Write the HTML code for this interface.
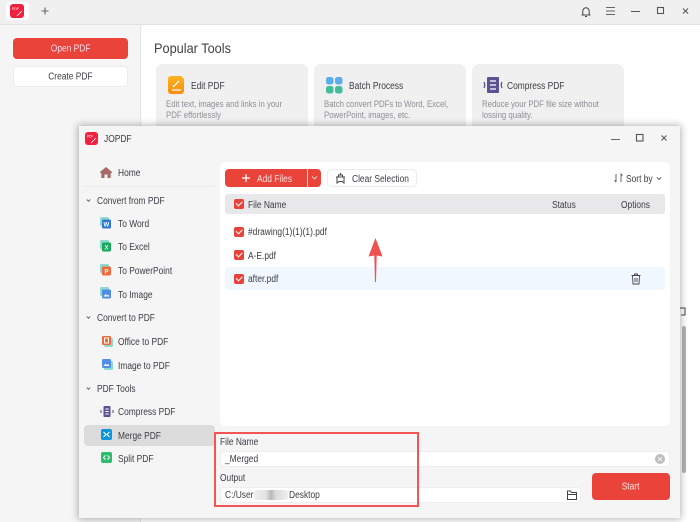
<!DOCTYPE html>
<html><head><meta charset="utf-8">
<style>
html,body{margin:0;padding:0;width:700px;height:522px;overflow:hidden;background:#fff}
body{font-family:"Liberation Sans","Noto Sans CJK SC",sans-serif;color:#3c3c44;position:relative;filter:blur(.25px)}
div,svg{position:absolute;box-sizing:border-box}
.t{white-space:nowrap;font-size:10px;line-height:14px;height:14px;transform:translateY(.8px) scaleX(.84);transform-origin:0 50%}
.t.g{color:#8e8e96;font-size:9px;line-height:10px;height:10px;transform:scaleX(.866)}
.b{white-space:nowrap;font-size:10px;text-align:center}
.b span{display:inline-block;transform:translateY(.7px) scaleX(.84)}
.card{background:#f0f0f0;border-radius:7px;width:152px;height:80px;top:64px}
.cb{width:10px;height:10px;background:#e8423a;border-radius:2px}
.cb:after{content:"";position:absolute;left:2px;top:2px;width:5px;height:2.5px;border-left:1.3px solid #fff;border-bottom:1.3px solid #fff;transform:rotate(-45deg)}
.nav{left:118px}
.sec{left:97px}
.chev{left:86px;width:5px;height:5px}
</style></head><body>

<!-- background app -->
<div style="left:0;top:0;width:700px;height:25px;background:#f0f0f0;border-bottom:1px solid #e2e2e2"></div>
<div style="left:6px;top:2px;width:23px;height:18px;background:#fff;border-radius:4px"></div>
<svg style="left:10px;top:4px" width="15" height="15" viewBox="0 0 15 15"><rect width="14" height="14" rx="3" fill="#f0213f"/><path d="M7 12l5-5" stroke="#fff" stroke-width=".8"/><text x="2" y="6" font-size="3.5" fill="#fff" font-family="Liberation Sans">PDF</text></svg>
<svg style="left:40px;top:6px" width="10" height="10" viewBox="0 0 10 10"><path d="M5 1.500v7M1.500 5h7" stroke="#666" stroke-width="1.100"/></svg>
<svg style="left:580px;top:5px" width="12" height="13" viewBox="0 0 12 13"><path d="M1.500 10h9M2.800 10V6a3.200 3.200 0 0 1 6.400 0v4M5 11.500h2" fill="none" stroke="#444" stroke-width="1"/></svg>
<svg style="left:605px;top:6px" width="11" height="10" viewBox="0 0 11 10"><path d="M1 1.500h9M1 5h9M1 8.500h9" stroke="#666" stroke-width="1"/></svg>
<svg style="left:630px;top:6px" width="11" height="10" viewBox="0 0 11 10"><path d="M1 5.500h9" stroke="#555" stroke-width="1"/></svg>
<svg style="left:656px;top:6px" width="10" height="10" viewBox="0 0 10 10"><rect x="1.500" y="1.500" width="6" height="6" fill="none" stroke="#555" stroke-width="1.100"/></svg>
<svg style="left:681px;top:6px" width="10" height="10" viewBox="0 0 10 10"><path d="M2 2.500l5 5M7 2.500l-5 5" stroke="#555" stroke-width="1"/></svg>

<div style="left:0;top:25px;width:141px;height:497px;background:#f5f5f5;border-right:1px solid #e6e6e6"></div>
<div class="b" style="left:13px;top:38px;width:115px;height:21px;background:#e9433a;border-radius:4px;color:#fde;line-height:21px"><span>Open PDF</span></div>
<div class="b" style="left:13px;top:66px;width:115px;height:21px;background:#fff;border:1px solid #ececec;border-radius:4px;line-height:19px"><span>Create PDF</span></div>
<div class="t" style="left:154px;top:39.500px;font-size:14px;line-height:17px;height:17px;color:#404048;transform:scaleX(.91)">Popular Tools</div>

<div class="card" style="left:156px"></div>
<div class="card" style="left:314px"></div>
<div class="card" style="left:472px"></div>

<svg style="left:168px;top:76px" width="17" height="18" viewBox="0 0 17 18"><defs><linearGradient id="o" x1="0" y1="0" x2="0" y2="1"><stop offset="0" stop-color="#ffb31f"/><stop offset="1" stop-color="#fb8c0f"/></linearGradient></defs><path d="M3 0h10l3 3v12a3 3 0 0 1-3 3H3a3 3 0 0 1-3-3V3a3 3 0 0 1 3-3z" fill="url(#o)"/><path d="M4 14h9M5 11l6-6" stroke="#fff" stroke-width="1.300"/></svg>
<div class="t" style="left:191px;top:79px">Edit PDF</div>
<div class="t g" style="left:166px;top:99px">Edit text, images and links in your</div>
<div class="t g" style="left:166px;top:109.500px">PDF effortlessly</div>

<svg style="left:326px;top:77px" width="17" height="17" viewBox="0 0 17 17"><rect width="7.500" height="7.500" rx="2.500" fill="#5cade8"/><rect x="9" width="7.500" height="7.500" rx="2.500" fill="#5cade8"/><rect y="9" width="7.500" height="7.500" rx="2.500" fill="#43bd9c"/><rect x="9" y="9" width="7.500" height="7.500" rx="2.500" fill="#43bd9c"/></svg>
<div class="t" style="left:349px;top:79px">Batch Process</div>
<div class="t g" style="left:324px;top:99px">Batch convert PDFs to Word, Excel,</div>
<div class="t g" style="left:324px;top:109.500px">PowerPoint, images, etc.</div>

<svg style="left:483px;top:76px" width="20" height="18" viewBox="0 0 20 18"><rect x="4" y="1" width="12" height="16" rx="1" fill="#5b5293"/><path d="M7 5h6M7 9h6M7 13h6" stroke="#fff" stroke-width="1.200"/><path d="M1 6q1.500 3 0 6M19 6q-1.500 3 0 6" fill="none" stroke="#5b5293" stroke-width="1.300"/></svg>
<div class="t" style="left:507px;top:79px">Compress PDF</div>
<div class="t g" style="left:482px;top:99px">Reduce your PDF file size without</div>
<div class="t g" style="left:482px;top:109.500px">lossing quality.</div>

<!-- scrollbar behind -->
<div style="left:682px;top:326px;width:4px;height:147px;background:#b4b4b4;border-radius:2px"></div>
<svg style="left:680px;top:305px" width="6" height="12" viewBox="0 0 6 12"><path d="M0 3h5v7H1" fill="none" stroke="#444" stroke-width="1"/></svg>

<!-- dialog -->
<div style="left:79px;top:126px;width:601px;height:392px;background:#f5f5f5;box-shadow:0 0 7px 1px rgba(0,0,0,.3)"></div>
<svg style="left:85px;top:132px" width="14" height="14" viewBox="0 0 14 14"><rect width="13" height="13" rx="3" fill="#f0213f"/><path d="M6 11l5-5" stroke="#fff" stroke-width=".8"/><text x="2" y="5.500" font-size="3.200" fill="#fff" font-family="Liberation Sans">PDF</text></svg>
<div class="t" style="left:104px;top:132px">JOPDF</div>
<svg style="left:610px;top:134px" width="11" height="10" viewBox="0 0 11 10"><path d="M1 5.500h9" stroke="#666" stroke-width="1"/></svg>
<svg style="left:635px;top:133px" width="10" height="10" viewBox="0 0 10 10"><rect x="1.500" y="1.500" width="6.500" height="6.500" fill="none" stroke="#555" stroke-width="1.100"/></svg>
<svg style="left:660px;top:134px" width="10" height="10" viewBox="0 0 10 10"><path d="M1.500 1.500l5 5M6.500 1.500l-5 5" stroke="#555" stroke-width="1"/></svg>

<!-- dialog nav -->
<svg style="left:100px;top:167px" width="12" height="11" viewBox="0 0 12 11"><path d="M6 0L0 5v1h1.300v5h3.200V7.500h3V11h3.200V6H12V5z" fill="#a86a66"/></svg>
<div class="t" style="left:118px;top:166px">Home</div>
<div style="left:84px;top:186px;width:131px;height:1px;background:#ebebeb"></div>

<svg class="chev" style="top:198px" viewBox="0 0 5 5"><path d="M.8 1.500L2.500 3.300 4.200 1.500" fill="none" stroke="#555" stroke-width=".9"/></svg>
<div class="t sec" style="top:194px">Convert from PDF</div>

<svg style="left:100px;top:217px" width="13" height="13" viewBox="0 0 13 13"><rect width="9" height="9" rx="1.500" fill="#8fd8cf"/><rect x="2" y="2.500" width="9" height="9" rx="1.500" fill="#2f78d6"/><text x="3.500" y="9.500" font-size="6" font-weight="bold" fill="#fff" font-family="Liberation Sans">W</text></svg>
<div class="t nav" style="top:217px">To Word</div>
<svg style="left:100px;top:240px" width="13" height="13" viewBox="0 0 13 13"><rect width="9" height="9" rx="1.500" fill="#8fd8cf"/><rect x="2" y="2.500" width="9" height="9" rx="1.500" fill="#18a85e"/><text x="4.500" y="9.500" font-size="6" font-weight="bold" fill="#fff" font-family="Liberation Sans">X</text></svg>
<div class="t nav" style="top:240px">To Excel</div>
<svg style="left:100px;top:264px" width="13" height="13" viewBox="0 0 13 13"><rect width="9" height="9" rx="1.500" fill="#8fd8cf"/><rect x="2" y="2.500" width="9" height="9" rx="1.500" fill="#ee6a3c"/><text x="4.500" y="9.500" font-size="6" font-weight="bold" fill="#fff" font-family="Liberation Sans">P</text></svg>
<div class="t nav" style="top:264px">To PowerPoint</div>
<svg style="left:100px;top:287px" width="13" height="13" viewBox="0 0 13 13"><rect width="9" height="9" rx="1.500" fill="#8fd8cf"/><rect x="2" y="2.500" width="9" height="9" rx="1.500" fill="#4f8fe6"/><path d="M3.500 9.500l2-2.500 1.500 1.500 1-1 1.500 2z" fill="#fff"/></svg>
<div class="t nav" style="top:288px">To Image</div>

<svg class="chev" style="top:315px" viewBox="0 0 5 5"><path d="M.8 1.500L2.500 3.300 4.200 1.500" fill="none" stroke="#555" stroke-width=".9"/></svg>
<div class="t sec" style="top:311px">Convert to PDF</div>

<svg style="left:101px;top:335px" width="13" height="13" viewBox="0 0 13 13"><rect x="3" y="3" width="9" height="9" rx="1.500" fill="#8fd8cf"/><rect x="1" y="1" width="9" height="9" rx="1.500" fill="#ee6a3c"/><rect x="3.500" y="3" width="4" height="5" fill="none" stroke="#fff" stroke-width="1"/></svg>
<div class="t nav" style="top:335px">Office to PDF</div>
<svg style="left:101px;top:358px" width="13" height="13" viewBox="0 0 13 13"><rect x="3" y="3" width="9" height="9" rx="1.500" fill="#8fd8cf"/><rect x="1" y="1" width="9" height="9" rx="1.500" fill="#4f8fe6"/><path d="M2.500 8l2-2.500 1.500 1.500 1-1 1.500 2z" fill="#fff"/></svg>
<div class="t nav" style="top:359px">Image to PDF</div>

<svg class="chev" style="top:386px" viewBox="0 0 5 5"><path d="M.8 1.500L2.500 3.300 4.200 1.500" fill="none" stroke="#555" stroke-width=".9"/></svg>
<div class="t sec" style="top:382px">PDF Tools</div>

<svg style="left:100px;top:406px" width="14" height="12" viewBox="0 0 14 12"><rect x="3.500" y="0" width="7" height="11" rx="1" fill="#5b5293"/><path d="M5.300 3h3.400M5.300 5.500h3.400M5.300 8h3.400" stroke="#fff" stroke-width=".9"/><path d="M1 4v3M13 4v3" stroke="#5b5293" stroke-width="1.100"/></svg>
<div class="t nav" style="top:405px">Compress PDF</div>
<div style="left:84px;top:425px;width:131px;height:21px;background:#dcdcdc;border-radius:4px"></div>
<svg style="left:101px;top:429px" width="12" height="12" viewBox="0 0 12 12"><rect width="11" height="11" rx="2" fill="#0f94d8"/><path d="M2.500 3l2.500 2.500L2.500 8M8.500 3L6 5.500 8.500 8" fill="none" stroke="#fff" stroke-width="1"/></svg>
<div class="t nav" style="top:429px">Merge PDF</div>
<svg style="left:101px;top:452px" width="12" height="12" viewBox="0 0 12 12"><rect width="11" height="11" rx="2" fill="#2ebd6f"/><path d="M4.500 3.300L2.500 5.500l2 2.200M6.500 3.300l2 2.200-2 2.200" fill="none" stroke="#fff" stroke-width="1"/></svg>
<div class="t nav" style="top:452px">Split PDF</div>

<!-- content panel -->
<div style="left:220px;top:162px;width:450px;height:264px;background:#fff;border-radius:5px"></div>
<div style="left:225px;top:169px;width:96px;height:18px;background:#e9433a;border-radius:4px"></div>
<div style="left:307px;top:169px;width:1px;height:18px;background:#fbd8d5"></div>
<svg style="left:241px;top:173px" width="10" height="10" viewBox="0 0 10 10"><path d="M5 1v8M1 5h8" stroke="#fff" stroke-width="1.300"/></svg>
<div class="t" style="left:257px;top:172px;color:#fde4e2">Add Files</div>
<svg style="left:311px;top:175px" width="7" height="6" viewBox="0 0 7 6"><path d="M1 1.500L3.500 4 6 1.500" fill="none" stroke="#fbd8d5" stroke-width=".9"/></svg>
<div style="left:327px;top:169px;width:90px;height:18px;background:#fff;border:1px solid #ececec;border-radius:4px"></div>
<svg style="left:335px;top:172px" width="11" height="12" viewBox="0 0 11 12"><path d="M1 5h9M2 5v6l2-1.500h3L9 11V5M3.500 5V3h4v2M5.500 3V1" fill="none" stroke="#444" stroke-width="1"/></svg>
<div class="t" style="left:352px;top:172px">Clear Selection</div>
<svg style="left:613px;top:173px" width="11" height="11" viewBox="0 0 11 11"><path d="M3 1v8M1.500 7.500L3 9M8 9V1l1.500 1.500" fill="none" stroke="#555" stroke-width=".9"/></svg>
<div class="t" style="left:626px;top:172px">Sort by</div>
<svg style="left:656px;top:176px" width="6" height="5" viewBox="0 0 6 5"><path d="M.8 1.300L3 3.500l2.200-2.200" fill="none" stroke="#555" stroke-width=".9"/></svg>

<div style="left:225px;top:194px;width:440px;height:20px;background:#e8e8ea;border-radius:3px"></div>
<div class="cb" style="left:234px;top:199px"></div>
<div class="t" style="left:248px;top:198px">File Name</div>
<div class="t" style="left:552px;top:198px">Status</div>
<div class="t" style="left:621px;top:198px">Options</div>

<div style="left:225px;top:267px;width:440px;height:23px;background:#f0f7fe;border-radius:3px"></div>
<div class="cb" style="left:234px;top:227px"></div>
<div class="t" style="left:248px;top:225px">#drawing(1)(1)(1).pdf</div>
<div class="cb" style="left:234px;top:250px"></div>
<div class="t" style="left:248px;top:249px">A-E.pdf</div>
<div class="cb" style="left:234px;top:274px"></div>
<div class="t" style="left:248px;top:272px">after.pdf</div>
<svg style="left:630px;top:273px" width="12" height="12" viewBox="0 0 12 12"><path d="M1.500 2.500h9M4.500 2.500V1h3v1.500M2.500 2.500l.5 8.500h6l.5-8.500M5 5v4M7 5v4" fill="none" stroke="#444" stroke-width=".9"/></svg>

<svg style="left:366px;top:236px" width="20" height="48" viewBox="0 0 20 48"><path d="M9.500 2L2.500 20.500 8.300 19.500 9 46H10L10.700 19.500 16.500 20.500z" fill="#f24f50"/></svg>

<!-- bottom form -->
<div class="t" style="left:220px;top:435px">File Name</div>
<div style="left:220px;top:451px;width:450px;height:16px;background:#fff;border:1px solid #eee;border-radius:4px"></div>
<div class="t" style="left:225px;top:452px">_Merged</div>
<svg style="left:654px;top:453px" width="12" height="12" viewBox="0 0 12 12"><circle cx="6" cy="6" r="5" fill="#bdbdbd"/><path d="M4 4l4 4M8 4l-4 4" stroke="#f2f2f2" stroke-width="1"/></svg>
<div class="t" style="left:220px;top:471px">Output</div>
<div style="left:220px;top:487px;width:361px;height:16px;background:#fff;border:1px solid #eee;border-radius:4px"></div>
<div class="t" style="left:225px;top:488px">C:/User</div>
<div style="left:254px;top:490px;width:34px;height:10px;background:linear-gradient(90deg,#eee,#e2e2e2 35%,#b9b9b9 50%,#ddd 65%,#eee);border-radius:3px"></div>
<div class="t" style="left:289px;top:488px">Desktop</div>
<svg style="left:566px;top:489px" width="12" height="12" viewBox="0 0 12 12"><path d="M1.500 2h3l1 1.500h5V10.500h-9zM1.500 5.500h9" fill="none" stroke="#444" stroke-width="1"/></svg>
<div class="b" style="left:592px;top:473px;width:78px;height:27px;background:#e9433a;border-radius:4px;color:#fde4e2;line-height:27px"><span>Start</span></div>

<div style="left:214px;top:432px;width:205px;height:75px;border:2px solid #f35456"></div>
</body></html>
